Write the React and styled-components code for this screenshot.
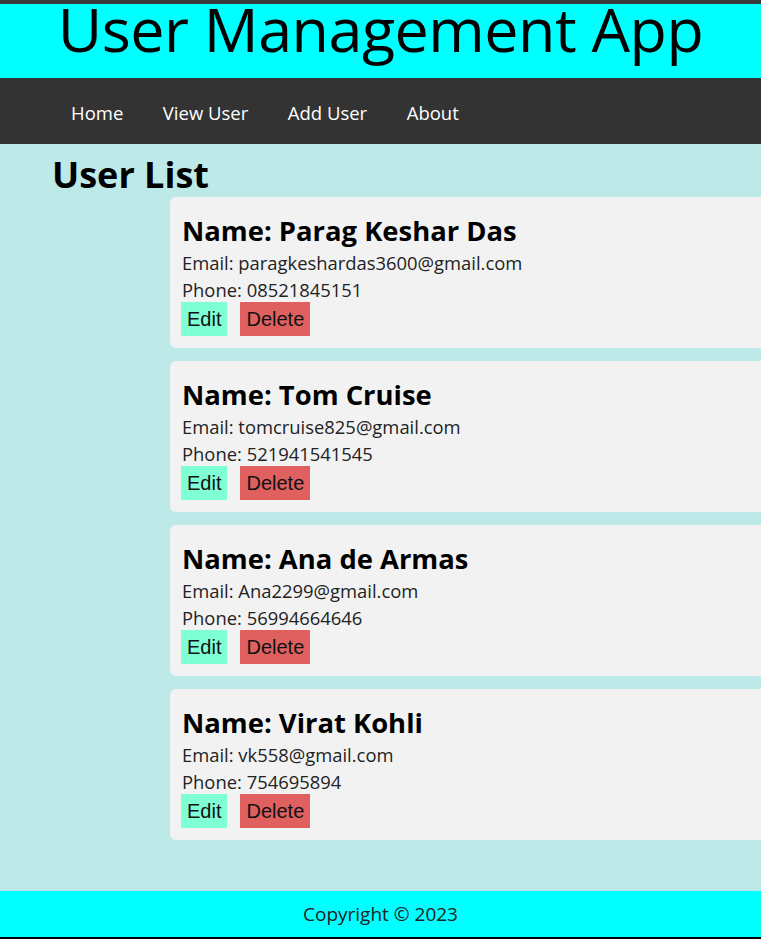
import styled, { createGlobalStyle } from 'styled-components';

const users = [
  { name: 'Parag Keshar Das', email: 'paragkeshardas3600@gmail.com', phone: '08521845151' },
  { name: 'Tom Cruise', email: 'tomcruise825@gmail.com', phone: '521941541545' },
  { name: 'Ana de Armas', email: 'Ana2299@gmail.com', phone: '56994664646' },
  { name: 'Virat Kohli', email: 'vk558@gmail.com', phone: '754695894' },
];

const GlobalStyle = createGlobalStyle`
  html, body {
    margin: 0;
    padding: 0;
  }
  body {
    font-family: 'Open Sans', 'Noto Sans', sans-serif;
    overflow-x: hidden;
  }
  * {
    box-sizing: border-box;
  }
`;

function App() {
  return (
    <Page>
      <GlobalStyle />
      <Header>
        <Title>User Management App</Title>
      </Header>
      <Nav>
        <NavLink>Home</NavLink>
        <NavLink>View User</NavLink>
        <NavLink>Add User</NavLink>
        <NavLink>About</NavLink>
      </Nav>
      <Main>
        <Heading>User List</Heading>
        <List>
          {users.map((user) => (
            <Card key={user.email}>
              <Name>Name: {user.name}</Name>
              <Info>Email: {user.email}</Info>
              <Info>Phone: {user.phone}</Info>
              <Actions>
                <Button $color="#7fffd4">Edit</Button>
                <Button $color="#e06060">Delete</Button>
              </Actions>
            </Card>
          ))}
        </List>
      </Main>
      <Footer>Copyright © 2023</Footer>
    </Page>
  );
}

export default App;

const Page = styled.div`
  min-height: 100vh;
  display: flex;
  flex-direction: column;
  border-top: 4px solid #3b3b3b;
  border-bottom: 2px solid #000;
  background: #bde9e9;
  overflow: hidden;
`;

const Header = styled.header`
  height: 74px;
  background: #00ffff;
  display: flex;
  justify-content: center;
`;

const Title = styled.h1`
  margin: 0;
  padding-top: 1px;
  font-size: 61px;
  font-weight: 400;
  line-height: 48px;
  letter-spacing: -0.5px;
  color: #000;
`;

const Nav = styled.nav`
  height: 66px;
  padding: 3px 0 0 71px;
  background: #333;
  display: flex;
  align-items: center;
  gap: 39.5px;
`;

const NavLink = styled.a`
  color: #fff;
  font-size: 18.5px;
  cursor: pointer;
`;

const Main = styled.main`
  flex: 1;
  padding: 9px 0 0 52px;
`;

const Heading = styled.h2`
  margin: 0;
  font-size: 36px;
  font-weight: 700;
  line-height: 44px;
  color: #000;
`;

const List = styled.div`
  margin-left: 118px;
  display: flex;
  flex-direction: column;
  gap: 13px;
  width: 640px;
`;

const Card = styled.div`
  height: 151px;
  padding: 16px 12px 0;
  background: #f2f2f2;
  border-radius: 6px;
`;

const Name = styled.h3`
  margin: 0;
  font-size: 27.4px;
  font-weight: 700;
  line-height: 36px;
  color: #000;
`;

const Info = styled.p`
  margin: 0;
  font-size: 18.4px;
  line-height: 27px;
  color: #222;
`;

const Actions = styled.div`
  display: flex;
  gap: 13px;
  margin: -1px 0 0 -1px;
`;

const Button = styled.button`
  height: 34px;
  padding: 0 6px;
  border: none;
  border-radius: 0;
  background: ${(p) => p.$color};
  color: #111;
  font-family: 'Liberation Sans', Arial, sans-serif;
  font-size: 20px;
  cursor: pointer;
`;

const Footer = styled.footer`
  height: 46px;
  background: #00ffff;
  display: flex;
  align-items: center;
  justify-content: center;
  font-size: 19px;
  color: #222;
`;
